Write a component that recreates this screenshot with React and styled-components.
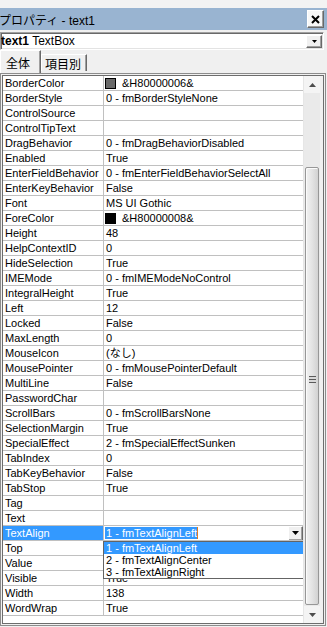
import React from 'react';
import styled, { createGlobalStyle } from 'styled-components';

const GlobalStyle = createGlobalStyle`
  html, body {
    margin: 0;
    padding: 0;
    background: #f0f0f0;
  }
  body {
    font-family: "Liberation Sans", "Noto Sans CJK JP", sans-serif;
    font-size: 11px;
    color: #000;
  }
`;

const Window = styled.div`
  width: 327px;
  height: 627px;
  overflow: hidden;
  display: flex;
  flex-direction: column;
  background: #f0f0f0;
`;

const TopStrip = styled.div`
  height: 8px;
  flex: none;
  background: #f3f3f3;
`;

const TitleBar = styled.div`
  height: 22px;
  flex: none;
  display: flex;
  align-items: center;
  justify-content: space-between;
  padding-right: 3px;
  background: #99b4d1;
  font-size: 12px;
`;

const TitleText = styled.span`
  margin-left: -1px;
  white-space: nowrap;
`;

const CloseButton = styled.div`
  width: 17px;
  height: 18px;
  box-sizing: border-box;
  display: flex;
  align-items: center;
  justify-content: center;
  background: #f7f7f7;
  border: 1px solid;
  border-color: #ffffff #696969 #696969 #ffffff;
  box-shadow: inset -1px -1px 0 #a0a0a0;
`;

const ObjectCombo = styled.div`
  height: 18px;
  flex: none;
  margin: 2px 3px 0 0;
  box-sizing: border-box;
  display: flex;
  align-items: center;
  justify-content: space-between;
  background: #fff;
  border: 1px solid;
  border-color: #a0a0a0 #ffffff #ffffff #a0a0a0;
  box-shadow: inset 1px 1px 0 #696969, inset -1px -1px 0 #e3e3e3;
  font-size: 12px;
  white-space: nowrap;
`;

const DropButton = styled.div`
  width: ${({ w }) => w || 16}px;
  height: ${({ h }) => h || 13}px;
  box-sizing: border-box;
  margin-right: ${({ mr }) => mr ?? 1}px;
  display: flex;
  align-items: center;
  justify-content: center;
  background: #f0f0f0;
  border: 1px solid;
  border-color: #ffffff #696969 #696969 #ffffff;
  box-shadow: inset -1px -1px 0 #a0a0a0;
`;

const TabStrip = styled.div`
  height: 23px;
  flex: none;
  display: flex;
  align-items: flex-start;
  font-size: 12px;
`;

const Tab = styled.div`
  box-sizing: border-box;
  display: flex;
  align-items: center;
  white-space: nowrap;
  border-top: 1px solid #fff;
  border-left: 1px solid #fff;
  border-right: 1px solid #696969;
  box-shadow: inset -1px 0 0 #a0a0a0;
  ${({ active }) => active ? `
    height: 23px;
    width: 41px;
    padding-left: 5px;
  ` : `
    height: 17px;
    margin-top: 4px;
    width: 46px;
    padding-left: 3px;
  `}
`;

const Frame = styled.div`
  height: 553px;
  width: 326px;
  flex: none;
  box-sizing: border-box;
  border: 1px solid #8c8c8c;
  padding: 1px;
  background: #f0f0f0;
`;

const Inner = styled.div`
  height: 100%;
  box-sizing: border-box;
  border: 1px solid #6d6d6d;
  background: #fff;
  display: flex;
`;

const Rows = styled.div`
  width: 300px;
  flex: none;
  overflow: hidden;
`;

const Row = styled.div`
  position: relative;
  height: 15px;
  box-sizing: border-box;
  display: flex;
  border-bottom: 1px solid #c0c0c0;
  line-height: 14px;
  white-space: nowrap;
`;

const NameCell = styled.div`
  width: 101px;
  flex: none;
  box-sizing: border-box;
  padding-left: 2px;
  border-right: 1px solid #c0c0c0;
  overflow: hidden;
  ${({ selected }) => selected ? `
    background: #3399ff;
    color: #fff;
  ` : ''}
`;

const ValueCell = styled.div`
  flex: 1;
  display: flex;
  align-items: center;
  padding-left: 1px;
  overflow: hidden;
`;

const ValueText = styled.span`
  padding-left: 1px;
`;

const Swatch = styled.span`
  width: 11px;
  height: 11px;
  box-sizing: border-box;
  flex: none;
  margin-right: 5px;
  border: 1px solid #000;
  background: ${({ color }) => color};
`;

const Highlight = styled.span`
  height: 12px;
  line-height: 12px;
  padding-left: 1px;
  background: #3399ff;
  color: #fff;
  border-right: 1px solid #e07a1f;
`;

const Spacer = styled.div`
  flex: 1;
`;

const DropList = styled.div`
  position: absolute;
  top: 15px;
  left: 100px;
  width: 201px;
  box-sizing: border-box;
  border: 1px solid #646464;
  background: #fff;
  z-index: 2;
`;

const ListItem = styled.div`
  height: 12px;
  line-height: 12px;
  padding-left: 2px;
  ${({ selected }) => selected ? `
    background: #3399ff;
    color: #fff;
  ` : ''}
`;

const ScrollBar = styled.div`
  width: 17px;
  flex: none;
  display: flex;
  flex-direction: column;
  background: #f4f4f4;
  border-left: 1px solid #e6e6e6;
  box-sizing: border-box;
`;

const Arrow = styled.div`
  height: 17px;
  flex: none;
  display: flex;
  align-items: center;
  justify-content: center;
`;

const Track = styled.div`
  flex: 1;
  display: flex;
  flex-direction: column;
  padding: 74px 0 1px;
  background: #eaeaea;
`;

const Thumb = styled.div`
  flex: 1;
  margin: 0 1px;
  box-sizing: border-box;
  border: 1px solid #979797;
  border-radius: 2px;
  background: linear-gradient(to right, #f2f2f2, #e4e4e4 50%, #d2d2d2);
  box-shadow: inset 1px 1px 0 #fbfbfb;
  display: flex;
  align-items: center;
  justify-content: center;
`;

const Grip = styled.div`
  width: 7px;
  height: 7px;
  margin-top: -14px;
  background: repeating-linear-gradient(
    to bottom,
    #5a5a5a 0,
    #5a5a5a 1px,
    #d8d8d8 1px,
    #d8d8d8 3px
  );
`;

const Gutter = styled.div`
  width: 3px;
  flex: none;
  background: #f0f0f0;
`;

const Tri = ({ up, color = '#000', w = 7, h = 4 }) => (
  <svg width={w} height={h} viewBox={`0 0 ${w} ${h}`}>
    <polygon
      points={up ? `0,${h} ${w},${h} ${w / 2},0` : `0,0 ${w},0 ${w / 2},${h}`}
      fill={color}
    />
  </svg>
);

const props = [
  ['BorderColor', '&H80000006&', '#696969'],
  ['BorderStyle', '0 - fmBorderStyleNone'],
  ['ControlSource', ''],
  ['ControlTipText', ''],
  ['DragBehavior', '0 - fmDragBehaviorDisabled'],
  ['Enabled', 'True'],
  ['EnterFieldBehavior', '0 - fmEnterFieldBehaviorSelectAll'],
  ['EnterKeyBehavior', 'False'],
  ['Font', 'MS UI Gothic'],
  ['ForeColor', '&H80000008&', '#000'],
  ['Height', '48'],
  ['HelpContextID', '0'],
  ['HideSelection', 'True'],
  ['IMEMode', '0 - fmIMEModeNoControl'],
  ['IntegralHeight', 'True'],
  ['Left', '12'],
  ['Locked', 'False'],
  ['MaxLength', '0'],
  ['MouseIcon', '(なし)'],
  ['MousePointer', '0 - fmMousePointerDefault'],
  ['MultiLine', 'False'],
  ['PasswordChar', ''],
  ['ScrollBars', '0 - fmScrollBarsNone'],
  ['SelectionMargin', 'True'],
  ['SpecialEffect', '2 - fmSpecialEffectSunken'],
  ['TabIndex', '0'],
  ['TabKeyBehavior', 'False'],
  ['TabStop', 'True'],
  ['Tag', ''],
  ['Text', ''],
  ['TextAlign', '1 - fmTextAlignLeft'],
  // values under the open list are hidden anyway
  ['Top', ''],
  ['Value', ''],
  ['Visible', 'True'],
  ['Width', '138'],
  ['WordWrap', 'True'],
];

const alignOptions = [
  '1 - fmTextAlignLeft',
  '2 - fmTextAlignCenter',
  '3 - fmTextAlignRight',
];

export default function App() {
  return (
    <Window>
      <GlobalStyle />
      <TopStrip />
      <TitleBar>
        <TitleText>プロパティ - text1</TitleText>
        <CloseButton>
          <svg width="9" height="9" viewBox="0 0 9 9">
            <path d="M1 1 L8 8 M8 1 L1 8" stroke="#000" strokeWidth="2" />
          </svg>
        </CloseButton>
      </TitleBar>
      <ObjectCombo>
        <span><b>text1</b> TextBox</span>
        <DropButton>
          <Tri w={5} h={3} />
        </DropButton>
      </ObjectCombo>
      <TabStrip>
        <Tab active>全体</Tab>
        <Tab>項目別</Tab>
      </TabStrip>
      <Frame>
        <Inner>
          <Rows>
            {props.map(([name, value, swatch]) => {
              const selected = name === 'TextAlign';
              return (
                <Row key={name}>
                  <NameCell selected={selected}>{name}</NameCell>
                  <ValueCell>
                    {swatch && <Swatch color={swatch} />}
                    {selected ? (
                      <>
                        <Highlight>{value}</Highlight>
                        <Spacer />
                        <DropButton w={15} h={15} mr={0}>
                          <Tri w={7} h={4} />
                        </DropButton>
                      </>
                    ) : (
                      <ValueText>{value}</ValueText>
                    )}
                  </ValueCell>
                  {selected && (
                    <DropList>
                      {alignOptions.map((o, i) => (
                        <ListItem key={o} selected={i === 0}>{o}</ListItem>
                      ))}
                    </DropList>
                  )}
                </Row>
              );
            })}
          </Rows>
          <ScrollBar>
            <Arrow>
              <Tri up w={7} h={4} color="#4d4d4d" />
            </Arrow>
            <Track>
              <Thumb>
                <Grip />
              </Thumb>
            </Track>
            <Arrow>
              <Tri w={7} h={4} color="#4d4d4d" />
            </Arrow>
          </ScrollBar>
          <Gutter />
        </Inner>
      </Frame>
    </Window>
  );
}
